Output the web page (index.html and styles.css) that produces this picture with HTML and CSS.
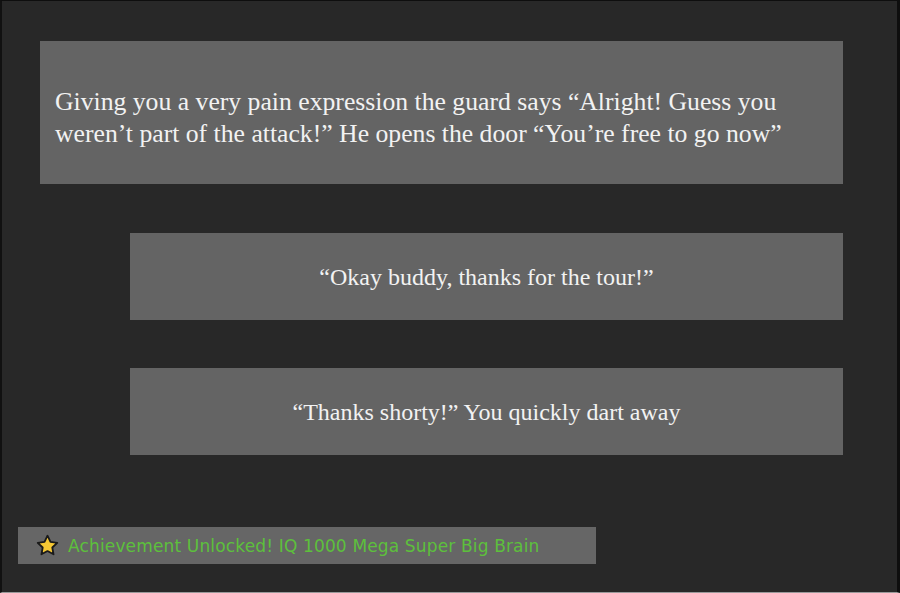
FILE: index.html
```html
<!DOCTYPE html>
<html>
<head>
<meta charset="utf-8">
<link rel="stylesheet" href="styles.css">
</head>
<body>
<div class="frame">
  <div class="story">Giving you a very pain expression the guard says “Alright! Guess you weren’t part of the attack!” He opens the door “You’re free to go now”</div>
  <div class="choice">“Okay buddy, thanks for the tour!”</div>
  <div class="choice">“Thanks shorty!” You quickly dart away</div>
  <div class="achievement">
    <svg class="star" width="23" height="23" viewBox="0 0 24 24"><path d="M12 1.8l3.1 6.5 7.1.9-5.2 4.9 1.3 7.1L12 17.8l-6.3 3.4 1.3-7.1L1.8 9.2l7.1-.9z" fill="#f7c934" stroke="#1a1a1a" stroke-width="1.9" stroke-linejoin="round"/></svg>
    <span class="ach-text">Achievement Unlocked! IQ 1000 Mega Super Big Brain</span>
  </div>
</div>
</body>
</html>
```
FILE: styles.css
```css
html, body {
  margin: 0;
  padding: 0;
  background: #272727;
}
.frame {
  box-sizing: border-box;
  width: 900px;
  height: 593px;
  border-top: 1px solid #0e0e0e;
  border-left: 2px solid #111;
  border-right: 3px solid #0e0e0e;
  border-bottom: 1px solid #9a9a9a;
  background: #282828;
  padding-top: 40px;
  display: flex;
  flex-direction: column;
}
.story {
  margin-left: 38px;
  width: 803px;
  box-sizing: border-box;
  background: #646464;
  color: #f2f2f2;
  font-family: "Liberation Serif", serif;
  font-size: 25.7px;
  line-height: 32px;
  padding: 45px 40px 34px 15px;
  height: 143px;
}
.choice {
  margin-left: 128px;
  width: 713px;
  height: 87px;
  box-sizing: border-box;
  background: #646464;
  color: #f2f2f2;
  font-family: "Liberation Serif", serif;
  font-size: 24px;
  display: flex;
  align-items: center;
  justify-content: center;
  padding-top: 2px;
}
.story + .choice { margin-top: 49px; }
.choice + .choice { margin-top: 48px; }
.achievement {
  margin-top: 72px;
  margin-left: 16px;
  width: 578px;
  height: 37px;
  box-sizing: border-box;
  background: #666;
  display: flex;
  align-items: center;
  padding-left: 18px;
  gap: 9px;
}
.star { flex: none; }
.ach-text {
  color: #5dc03c;
  font-family: "DejaVu Sans", sans-serif;
  font-size: 17px;
  letter-spacing: 0.15px;
  padding-top: 1px;
}
```
